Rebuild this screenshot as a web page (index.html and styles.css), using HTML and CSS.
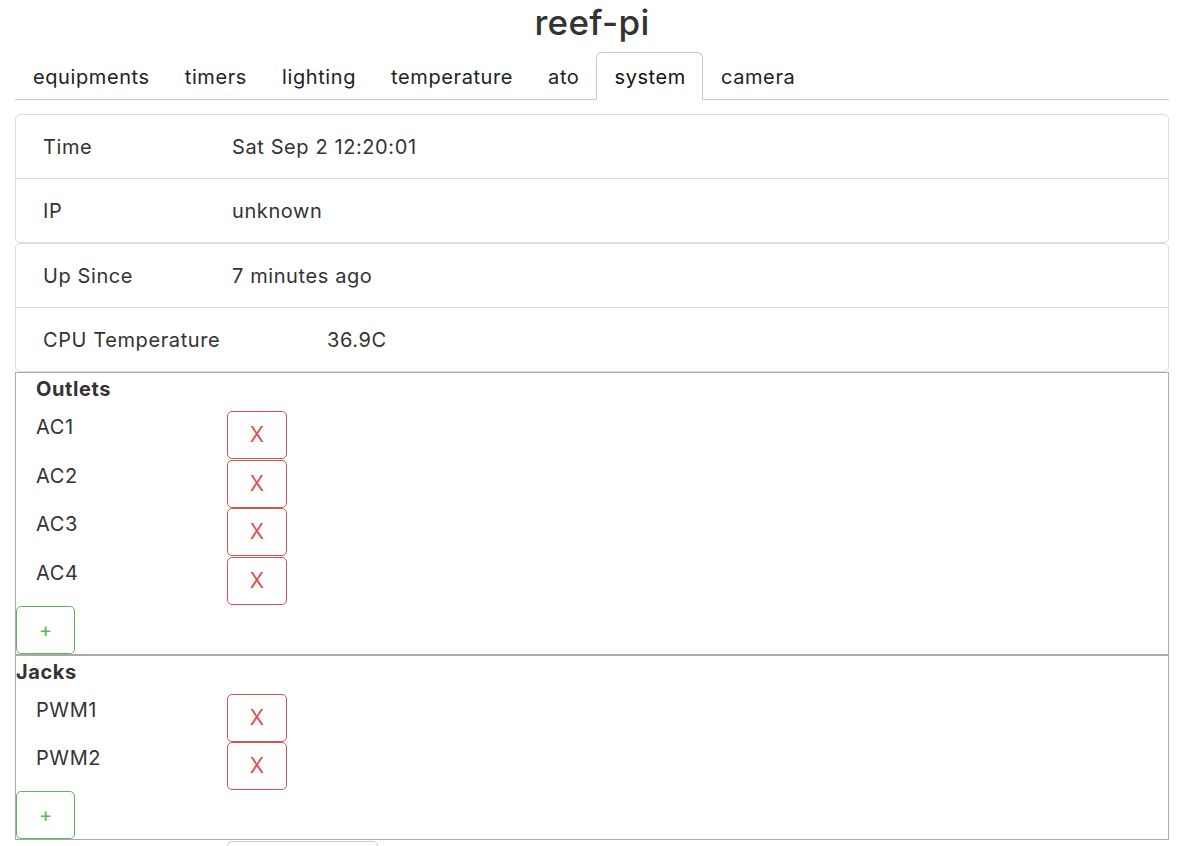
FILE: index.html
```html
<!DOCTYPE html>
<html>
<head>
<meta charset="utf-8">
<title>reef-pi</title>
<link rel="stylesheet" href="styles.css">
</head>
<body>
<div class="app">
  <h1 class="title">reef-pi</h1>
  <ul class="tabs">
    <li class="tab">equipments</li>
    <li class="tab">timers</li>
    <li class="tab">lighting</li>
    <li class="tab">temperature</li>
    <li class="tab">ato</li>
    <li class="tab active">system</li>
    <li class="tab">camera</li>
  </ul>
  <div class="content">
    <ul class="list-group">
      <li class="item"><span class="label">Time</span><span class="value">Sat Sep 2 12:20:01</span></li>
      <li class="item"><span class="label">IP</span><span class="value">unknown</span></li>
    </ul>
    <ul class="list-group">
      <li class="item"><span class="label">Up Since</span><span class="value">7 minutes ago</span></li>
      <li class="item"><span class="label label-wide">CPU Temperature</span><span class="value">36.9C</span></li>
    </ul>
    <section class="panel">
      <div class="panel-title">Outlets</div>
      <div class="row"><span class="name">AC1</span><button class="btn btn-x">X</button></div>
      <div class="row"><span class="name">AC2</span><button class="btn btn-x">X</button></div>
      <div class="row"><span class="name">AC3</span><button class="btn btn-x">X</button></div>
      <div class="row"><span class="name">AC4</span><button class="btn btn-x">X</button></div>
      <button class="btn btn-add">+</button>
    </section>
    <section class="panel">
      <div class="panel-title panel-title-flush">Jacks</div>
      <div class="row"><span class="name">PWM1</span><button class="btn btn-x">X</button></div>
      <div class="row"><span class="name">PWM2</span><button class="btn btn-x">X</button></div>
      <button class="btn btn-add">+</button>
    </section>
    <div class="more"><button class="btn btn-more"></button></div>
  </div>
</div>
</body>
</html>
```

FILE: styles.css
```css
* { box-sizing: border-box; }
html, body {
  margin: 0;
  padding: 0;
  background: #fff;
  overflow: hidden;
}
body {
  font-family: Inter, "Liberation Sans", Arial, sans-serif;
  font-size: 20px;
  letter-spacing: 0.6px;
  color: #333;
}
.app {
  width: 1154px;
  margin-left: 15px;
}
.title {
  margin: 0;
  font-size: 35px;
  line-height: 44px;
  font-weight: 500;
  letter-spacing: 0.3px;
  text-align: center;
  color: #333;
}
.tabs {
  list-style: none;
  margin: 8px 0 0;
  padding: 0;
  display: flex;
  border-bottom: 1px solid #c8c8c8;
  height: 48px;
}
.tab {
  padding: 0 16px 0 17px;
  height: 48px;
  line-height: 49px;
  color: #222;
  border: 1px solid transparent;
  border-radius: 6px 6px 0 0;
  margin-bottom: -1px;
}
.tab.active {
  border-color: #c8c8c8;
  border-bottom-color: #fff;
  background: #fff;
  color: #111;
}
.content {
  margin-top: 14px;
}
.list-group {
  list-style: none;
  margin: 0;
  padding: 0;
  border: 1px solid #dcdcdc;
  border-radius: 5px;
}
.item {
  display: flex;
  align-items: center;
  height: 63px;
  padding-left: 27px;
}
.item + .item {
  border-top: 1px solid #dcdcdc;
  height: 64px;
}
.label {
  width: 189px;
  flex: none;
}
.label-wide {
  width: 284px;
}
.panel {
  border: 1px solid #aaa;
}
.panel-title {
  font-weight: 700;
  line-height: 32px;
  margin-bottom: 6px;
  padding-left: 20px;
}
.panel-title-flush {
  padding-left: 0;
}
.row {
  display: flex;
  align-items: flex-start;
  padding-left: 20px;
  margin-bottom: 0.6px;
}
.name {
  width: 191px;
  line-height: 32px;
  flex: none;
}
.btn {
  font-family: inherit;
  letter-spacing: 0;
  background: #fff;
  border-radius: 5px;
  cursor: pointer;
  padding: 0;
}
.btn-x {
  width: 60px;
  height: 48px;
  border: 1px solid #d9534f;
  color: #d9534f;
  font-size: 21px;
  line-height: 46px;
}
.btn-add {
  display: block;
  width: 59px;
  height: 48px;
  margin-top: 1px;
  border: 1px solid #5cb85c;
  color: #5cb85c;
  font-size: 20px;
  line-height: 46px;
}
.more {
  padding-left: 212px;
  padding-top: 1px;
}
.btn-more {
  width: 151px;
  height: 40px;
  border: 1px solid #ccc;
}
```
